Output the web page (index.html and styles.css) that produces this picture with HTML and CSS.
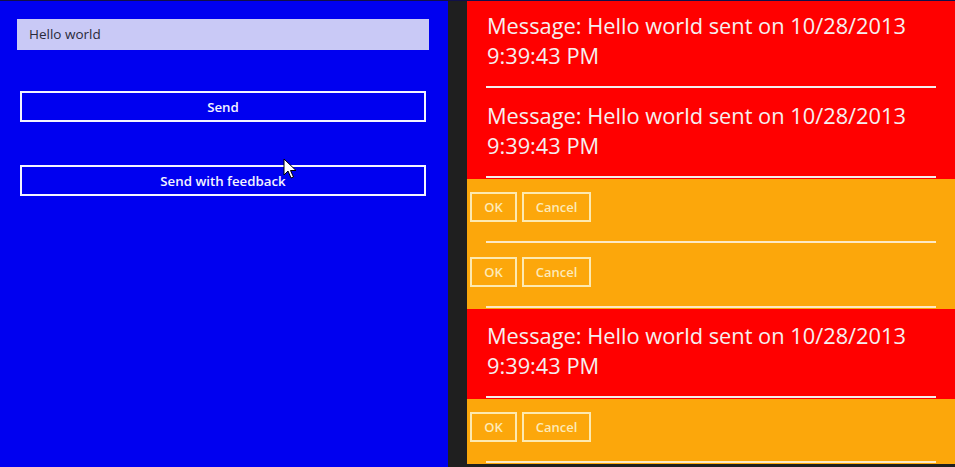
FILE: index.html
```html
<!DOCTYPE html>
<html>
<head>
<meta charset="utf-8">
<link rel="stylesheet" href="styles.css">
</head>
<body>
<div class="screen">
  <section class="sender">
    <div class="textbox">Hello world</div>
    <button class="btn-wide btn-send">Send</button>
    <button class="btn-wide btn-feedback">Send with feedback</button>
    <svg class="cursor" width="14" height="22" viewBox="0 0 14 22"><path d="M1 1 L1 17 L5 13 L8 20 L10.5 19 L7.5 12.5 L13 12.5 Z" fill="#fff" stroke="#000" stroke-width="1" stroke-linejoin="round"/></svg>
  </section>
  <section class="feed">
    <div class="item msg">
      <p class="msg-text">Message: Hello world sent on 10/28/2013 9:39:43 PM</p>
      <div class="sep"></div>
    </div>
    <div class="item msg">
      <p class="msg-text">Message: Hello world sent on 10/28/2013 9:39:43 PM</p>
      <div class="sep"></div>
    </div>
    <div class="item ask">
      <div class="actions"><button class="btn-small btn-ok">OK</button><button class="btn-small btn-cancel">Cancel</button></div>
      <div class="sep"></div>
    </div>
    <div class="item ask">
      <div class="actions"><button class="btn-small btn-ok">OK</button><button class="btn-small btn-cancel">Cancel</button></div>
      <div class="sep"></div>
    </div>
    <div class="item msg">
      <p class="msg-text">Message: Hello world sent on 10/28/2013 9:39:43 PM</p>
      <div class="sep"></div>
    </div>
    <div class="item ask">
      <div class="actions"><button class="btn-small btn-ok">OK</button><button class="btn-small btn-cancel">Cancel</button></div>
      <div class="sep"></div>
    </div>
  </section>
</div>
</body>
</html>
```

FILE: styles.css
```css
html, body {
  margin: 0;
  padding: 0;
  background: #1f1f1f;
  font-family: "Open Sans", "Noto Sans", sans-serif;
}

.screen {
  width: 955px;
  height: 467px;
  display: flex;
  gap: 19px;
  box-sizing: border-box;
  border-top: 1px solid #10104a;
  overflow: hidden;
}

.sender {
  position: relative;
  width: 448px;
  flex: none;
  background: #0000f0;
  display: flex;
  flex-direction: column;
  align-items: flex-start;
  padding: 18px 0 0 17px;
  box-sizing: border-box;
}

.textbox {
  width: 412px;
  height: 31px;
  box-sizing: border-box;
  background: #c9c9f6;
  color: #2a2a3a;
  font-size: 13.5px;
  line-height: 31px;
  padding-left: 12px;
}

.btn-wide {
  margin-left: 3px;
  width: 406px;
  height: 31px;
  box-sizing: border-box;
  background: transparent;
  border: 2px solid #f4f4ff;
  color: #f4f4ff;
  font-family: inherit;
  font-size: 13.3px;
  font-weight: 600;
  padding: 0;
}

.btn-send { margin-top: 41px; }
.btn-feedback { margin-top: 43px; }

.cursor {
  position: absolute;
  left: 283px;
  top: 157px;
}

.feed {
  flex: 1;
  display: flex;
  flex-direction: column;
  margin-top: -2px;
}

.item {
  flex: none;
  display: flex;
  flex-direction: column;
}

.msg {
  height: 90px;
  background: #ff0000;
}

.ask {
  height: 65px;
  background: #fca70b;
}

.msg-text {
  margin: 0;
  padding: 12px 24px 0 20px;
  color: #f6f0f0;
  font-size: 21.8px;
  line-height: 30px;
}

.sep {
  margin: auto 19px 1px 19px;
  height: 2px;
  background: #f4eeee;
}

.ask .sep {
  background: #fde9c4;
}

.actions {
  display: flex;
  gap: 5px;
  padding: 13px 0 0 3px;
}

.btn-small {
  height: 30px;
  box-sizing: border-box;
  background: transparent;
  border: 2px solid #fdeab0;
  color: #fdeab8;
  font-family: inherit;
  font-size: 13px;
  font-weight: 600;
  padding: 0;
}

.btn-ok { width: 47px; }
.btn-cancel { width: 69px; }
```
